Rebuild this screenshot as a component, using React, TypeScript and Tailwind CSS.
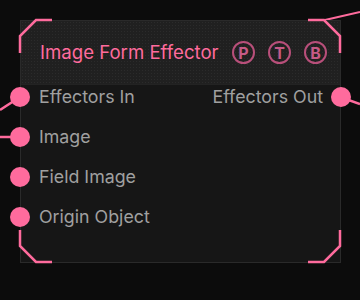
import React from 'react';

const PINK = '#ff6b9d';

const inputs = ['Effectors In', 'Image', 'Field Image', 'Origin Object'];

const Badge: React.FC<{ letter: string }> = ({ letter }) => (
    <div className="w-[23px] h-[23px] shrink-0 rounded-full border-2 border-[#b84f7a] flex items-center justify-center text-[#c55a86] text-[16px] font-bold leading-none">
        {letter}
    </div>
);

const Pin: React.FC<{ side: 'left' | 'right' }> = ({ side }) => (
    <div
        className={`absolute top-1/2 -translate-y-1/2 w-[20px] h-[20px] rounded-full bg-[#ff6b9d] ${side === 'left' ? 'left-[-11px]' : 'right-[-11px]'}`}
    />
);

const App: React.FC = () => {
    return (
        <div className="relative w-[360px] h-[300px] overflow-hidden bg-[#0c0c0c] pt-[20px] pl-[20px]" style={{ fontFamily: 'Inter, "Noto Sans", sans-serif' }}>
            {/* wires leaving the frame */}
            <svg className="absolute inset-0" width="360" height="300" fill="none" stroke={PINK} strokeWidth={2.5}>
                <path d="M20 97 L0 110" />
                <path d="M20 137 L0 137" />
                <path d="M340 97 L360 104" />
                <path d="M325 20 L360 12" strokeWidth={2} />
            </svg>

            {/* Node */}
            <div className="relative w-[321px] h-[243px] bg-[#161616] border border-[#2a2a2a] flex flex-col">
                {/* Header */}
                <div className="h-[63px] flex items-center justify-between pl-[19px] pr-[13px] bg-[#202020] bg-[radial-gradient(#2b2b2b_0.6px,transparent_0.8px)] bg-[size:3px_3px]">
                    <span className="text-[18.6px] text-[#ff6b9d]">Image Form Effector</span>
                    <div className="flex gap-[13px]">
                        <Badge letter="P" />
                        <Badge letter="T" />
                        <Badge letter="B" />
                    </div>
                </div>
                <div className="h-[1px] bg-[#232323]" />

                {/* Rows */}
                <div className="flex flex-col gap-[16px]">
                    {inputs.map((label, i) => (
                        <div key={label} className="relative h-[24px] flex items-center justify-between pl-[18px] pr-[17px]">
                            <Pin side="left" />
                            <span className="text-[17.8px] text-[#a0a0a0]">{label}</span>
                            {i === 0 && (
                                <>
                                    <span className="text-[17.8px] text-[#a0a0a0]">Effectors Out</span>
                                    <Pin side="right" />
                                </>
                            )}
                        </div>
                    ))}
                </div>
            </div>

            {/* Selection corner brackets */}
            <svg className="absolute inset-0 pointer-events-none" width="360" height="300" fill="none" stroke={PINK} strokeWidth={2.5}>
                <path d="M20 53 L20 36 L36 20 L52 20" />
                <path d="M308 20 L324 20 L340 36 L340 53" />
                <path d="M20 230 L20 246 L36 262 L52 262" />
                <path d="M308 262 L324 262 L340 246 L340 230" />
            </svg>
        </div>
    );
};

export default App;
